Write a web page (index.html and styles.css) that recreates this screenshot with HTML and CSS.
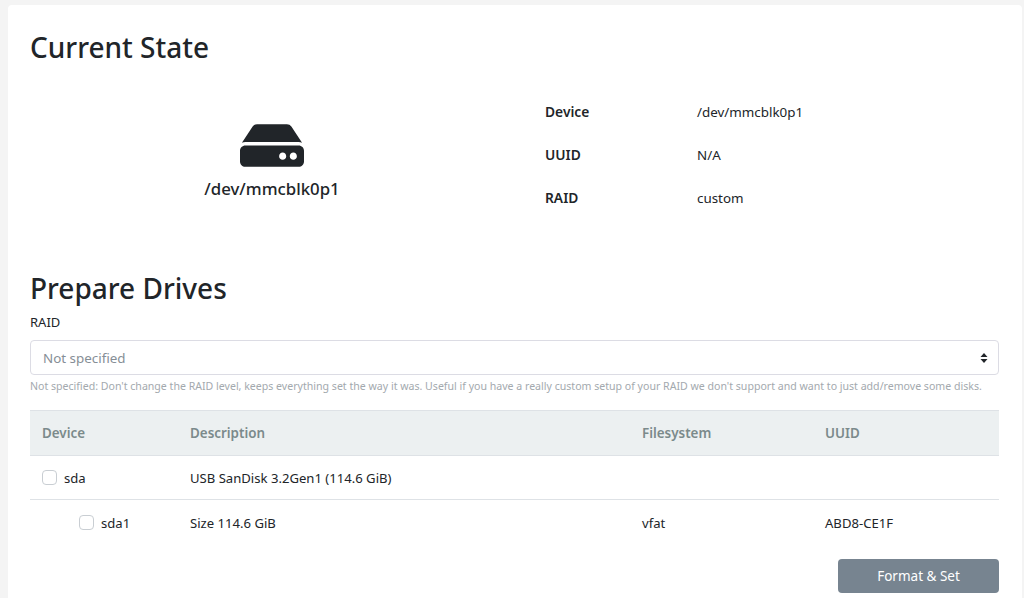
FILE: index.html
```html
<!DOCTYPE html>
<html lang="en">
<head>
<meta charset="utf-8">
<title>Prepare Drives</title>
<link rel="stylesheet" href="styles.css">
</head>
<body>
<main class="card">
  <h3 class="title">Current State</h3>
  <section class="state">
    <div class="drive">
      <svg class="drive-icon" viewBox="0 0 576 512" aria-hidden="true"><path fill="#212529" d="M576 304v96c0 26.51-21.49 48-48 48H48c-26.51 0-48-21.49-48-48v-96c0-26.51 21.49-48 48-48h480c26.51 0 48 21.49 48 48zm-48-80a79.557 79.557 0 0 1 30.777 6.165L462.25 85.374A48.003 48.003 0 0 0 422.311 64H153.689a48 48 0 0 0-39.938 21.374L17.223 230.165A79.557 79.557 0 0 1 48 224h480zm-48 96c-17.673 0-32 14.327-32 32s14.327 32 32 32 32-14.327 32-32-14.327-32-32-32zm-96 0c-17.673 0-32 14.327-32 32s14.327 32 32 32 32-14.327 32-32-14.327-32-32-32z"/></svg>
      <div class="drive-name">/dev/mmcblk0p1</div>
    </div>
    <dl class="info">
      <dt>Device</dt><dd>/dev/mmcblk0p1</dd>
      <dt>UUID</dt><dd>N/A</dd>
      <dt>RAID</dt><dd>custom</dd>
    </dl>
  </section>
  <h3 class="title">Prepare Drives</h3>
  <label class="field-label">RAID</label>
  <div class="select">
    <span>Not specified</span>
    <svg class="carets" viewBox="0 0 8 12" aria-hidden="true"><path fill="#212529" d="M4 1 7.5 5H.5zM4 11 .5 7h7z"/></svg>
  </div>
  <p class="help">Not specified: Don't change the RAID level, keeps everything set the way it was. Useful if you have a really custom setup of your RAID we don't support and want to just add/remove some disks.</p>
  <table class="drives">
    <thead>
      <tr><th class="c-device">Device</th><th class="c-desc">Description</th><th class="c-fs">Filesystem</th><th>UUID</th></tr>
    </thead>
    <tbody>
      <tr class="row-drive">
        <td><span class="check-cell"><span class="check"></span>sda</span></td>
        <td>USB SanDisk 3.2Gen1 (114.6 GiB)</td><td></td><td></td>
      </tr>
      <tr class="row-part">
        <td><span class="check-cell nested"><span class="check"></span>sda1</span></td>
        <td>Size 114.6 GiB</td><td>vfat</td><td>ABD8-CE1F</td>
      </tr>
    </tbody>
  </table>
  <div class="actions"><button class="btn" type="button">Format &amp; Set</button></div>
</main>
</body>
</html>
```
FILE: styles.css
```css
* { box-sizing: border-box; }
html, body { height: 100%; }
body {
  margin: 0;
  padding: 5px 2px 0 8px;
  background: #f4f4f4;
  color: #212529;
  font-family: "Noto Sans", "Open Sans", sans-serif;
  font-size: 13.4px;
  overflow: hidden;
}
.card {
  background: #fff;
  border-radius: 4px 4px 0 0;
  padding: 23px 23px 0 22px;
  height: 593px;
  overflow: hidden;
}
.title {
  margin: 0;
  font-size: 28px;
  font-weight: 500;
  line-height: 38px;
}
.state {
  display: flex;
  height: 203px;
}
.drive {
  width: 484px;
  padding-top: 51px;
  display: flex;
  flex-direction: column;
  align-items: center;
}
.drive-icon { width: 64px; height: 57px; display: block; }
.drive-name {
  margin-top: 3px;
  font-size: 16.8px;
  font-weight: 500;
  line-height: 23px;
}
.info {
  margin: 0;
  padding: 24px 0 0 31px;
  display: grid;
  grid-template-columns: 152px 1fr;
  grid-auto-rows: 43px;
  align-items: center;
  flex: 1;
  align-content: start;
}
.info dt { font-weight: 600; font-size: 13.8px; }
.info dd { margin: 0; }
.field-label { display: block; margin-top: 6px; font-size: 13px; line-height: 18px; }
.select {
  margin-top: 9px;
  height: 35px;
  border: 1px solid #dcdce4;
  border-radius: 4px;
  padding: 0 11px 0 12px;
  display: flex;
  align-items: center;
  justify-content: space-between;
  color: #868e96;
  font-size: 13.4px;
}
.carets { width: 8px; height: 12px; margin-right: -1px; }
.help {
  margin: 3px 0 0;
  font-size: 10.58px;
  line-height: 17px;
  color: #a3a9ae;
  white-space: nowrap;
}
.drives {
  margin-top: 15px;
  width: 100%;
  border-collapse: collapse;
  table-layout: fixed;
}
.drives th {
  background: #ecf0f1;
  border-top: 1px solid #dee2e6;
  border-bottom: 1px solid #dee2e6;
  color: #7b8a8b;
  font-size: 13.4px;
  font-weight: 600;
  text-align: left;
  height: 45px;
  padding: 0 11px 0 12px;
}
.c-device { width: 148px; }
.c-desc { width: 452px; }
.c-fs { width: 183px; }
.drives td { padding: 0 11px 0 12px; font-size: 13.1px; height: 44px; }
.row-drive td { border-bottom: 1px solid #dee2e6; }
.row-part td { height: 46px; }
.check-cell { display: flex; align-items: center; gap: 7px; }
.nested { padding-left: 37px; }
.check {
  width: 15px;
  height: 15px;
  border: 1px solid #c9ced3;
  border-radius: 4px;
  background: #fff;
}
.actions { display: flex; justify-content: flex-end; margin-top: 13px; }
.btn {
  width: 161px;
  height: 34px;
  border: 0;
  border-radius: 4px;
  background: #778490;
  color: #fff;
  font: 13.5px "Noto Sans", "Open Sans", sans-serif;
}
```
